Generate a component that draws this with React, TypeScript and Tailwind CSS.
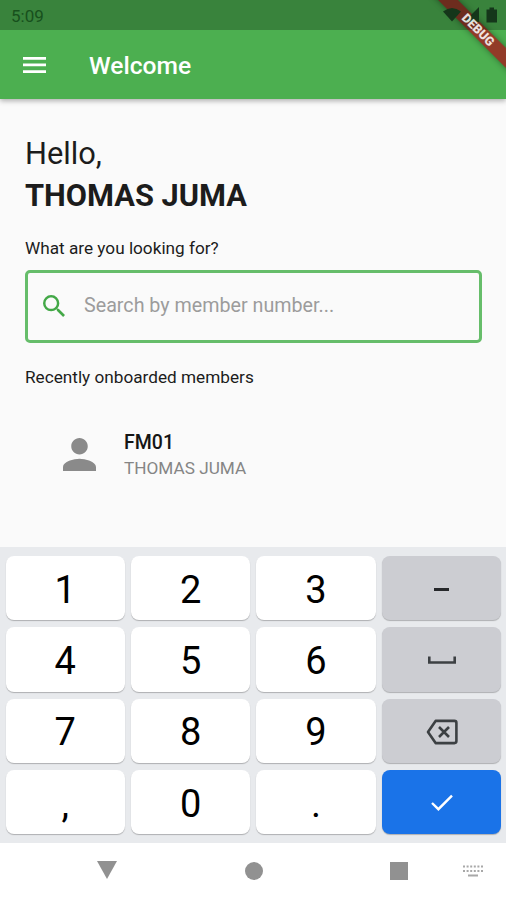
import type { ReactNode } from 'react';
import clsx from 'clsx';

interface Key {
  id: string;
  label?: string;
  icon?: ReactNode;
  variant?: 'default' | 'muted' | 'primary';
}

const keys: Key[] = [
  { id: '1', label: '1' },
  { id: '2', label: '2' },
  { id: '3', label: '3' },
  {
    id: 'minus',
    variant: 'muted',
    icon: (
      <svg className="h-[3px] w-[15px]" viewBox="0 0 15 3" fill="#26282b">
        <rect width="15" height="3" />
      </svg>
    ),
  },
  { id: '4', label: '4' },
  { id: '5', label: '5' },
  { id: '6', label: '6' },
  {
    id: 'space',
    variant: 'muted',
    icon: (
      <svg className="h-2 w-7" viewBox="0 0 28 8" fill="none" stroke="#3c4043" strokeWidth="2.6">
        <path d="M1.3 0.5V6.5H26.7V0.5" />
      </svg>
    ),
  },
  { id: '7', label: '7' },
  { id: '8', label: '8' },
  { id: '9', label: '9' },
  {
    id: 'backspace',
    variant: 'muted',
    icon: (
      <svg className="h-[26px] w-8" viewBox="0 0 32 26" fill="none" stroke="#3c4043" strokeWidth="2.6">
        <path d="M9.6 1.9H28.4Q30.4 1.9 30.4 3.9V22.1Q30.4 24.1 28.4 24.1H9.6L2 13Z" strokeLinejoin="round" />
        <path d="M13 8L23 18M23 8L13 18" />
      </svg>
    ),
  },
  { id: 'comma', label: ',' },
  { id: '0', label: '0' },
  { id: 'dot', label: '.' },
  {
    id: 'done',
    variant: 'primary',
    icon: (
      <svg className="h-[18px] w-[22px]" viewBox="0 0 22 18" fill="none" stroke="#fff" strokeWidth="2.4">
        <path d="M1 9L7.4 15.2L21 1.6" />
      </svg>
    ),
  },
];

const StatusBar = () => (
  <div className="absolute inset-x-0 top-0 flex h-[30px] items-center justify-between bg-black/25 pr-[9px] pl-[11px] text-[#17501c]">
    <span className="pt-[3px] text-[17px]">5:09</span>
    <svg className="h-4 w-[54px]" viewBox="0 0 54 16" fill="#15361a">
      <path d="M0 4.5Q9 -2.5 18 4.5L9 14.5Z" />
      <path d="M36 0V15H21Z" />
      <path d="M46.5 0.5H51V2.5H54V15.5H43.5V2.5H46.5Z" />
    </svg>
  </div>
);

const DebugBanner = () => (
  <div className="absolute top-[23px] left-[418px] h-[14px] w-[120px] rotate-45 bg-[#923b28] shadow-[0_0_6px_rgba(0,0,0,0.4)]" />
);

// sits above the status icons, the ribbon itself stays under them
const DebugLabel = () => (
  <span className="absolute top-[24px] left-[457px] w-[42px] rotate-45 text-center text-[12.5px] leading-[12px] font-black text-white/85">
    DEBUG
  </span>
);

const AppBar = () => (
  <header className="relative h-[99px] shrink-0 bg-[#4caf50] shadow-[0_2px_5px_rgba(0,0,0,0.3)]">
    <div className="absolute inset-0 overflow-hidden">
      <DebugBanner />
    </div>
    <StatusBar />
    <DebugLabel />
    <div className="flex h-full items-center pt-[31px] pl-[23px] text-white">
      <svg className="h-4 w-[23px]" viewBox="0 0 23 16" fill="currentColor">
        <path d="M0 0H23V2.7H0ZM0 6.6H23V9.3H0ZM0 13.2H23V15.9H0Z" />
      </svg>
      <h1 className="ml-[43px] pt-[2px] text-[24.6px] font-medium">Welcome</h1>
    </div>
  </header>
);

const SearchBox = () => (
  <div className="mt-[12px] flex h-[73px] items-center rounded-[5px] border-[3px] border-[#66bd6a] pb-[2px] pl-[15px]">
    <svg className="size-[22px]" viewBox="3 3 17.5 17.5" fill="#43a847">
      <path d="M15.5 14h-.79l-.28-.27A6.47 6.47 0 0 0 16 9.5 6.5 6.5 0 1 0 9.5 16c1.61 0 3.09-.59 4.23-1.57l.27.28v.79l5 4.99L20.49 19l-4.99-5zm-6 0C7.01 14 5 11.99 5 9.5S7.01 5 9.5 5 14 7.01 14 9.5 11.99 14 9.5 14z" />
    </svg>
    <span className="ml-[19px] text-[19.7px] text-[#9c9c9c]">Search by member number...</span>
  </div>
);

const MemberRow = ({ code, name }: { code: string; name: string }) => (
  <div className="mt-[42px] flex items-center pl-[38px]">
    <svg className="mb-px h-[33px] w-[33px]" viewBox="4 4 16 16" fill="#8a8a8a">
      <path d="M12 12c2.21 0 4-1.79 4-4s-1.79-4-4-4-4 1.79-4 4 1.79 4 4 4zm0 2c-2.67 0-8 1.34-8 4v2h16v-2c0-2.66-5.33-4-8-4z" />
    </svg>
    <div className="ml-7">
      <p className="pt-px text-[19.5px] leading-[26px] font-medium text-[#151515]">{code}</p>
      <p className="text-[17.2px] leading-[24px] text-[#858585]">{name}</p>
    </div>
  </div>
);

const Keyboard = () => (
  <div className="grid h-[296px] shrink-0 grid-cols-4 content-start gap-x-[6px] gap-y-[7px] bg-[#e8eaed] pt-[9px] pr-[5px] pl-[5.5px]">
    {keys.map(({ id, label, icon, variant = 'default' }) => (
      <button
        key={id}
        className={clsx(
          'flex h-[64.3px] items-center justify-center rounded-[8px] text-[38px] leading-none text-black shadow-[0_1px_1px_rgba(0,0,0,0.25)]',
          label ? 'pt-[3px]' : 'pt-[2px] pl-px',
          variant === 'default' && 'bg-white',
          variant === 'muted' && 'bg-[#cccdd2]',
          variant === 'primary' && 'bg-[#1a73e8]'
        )}
      >
        {icon ?? label}
      </button>
    ))}
  </div>
);

const NavBar = () => (
  <nav className="flex h-[57px] shrink-0 items-start bg-white pt-[18px] pl-[97px] text-[#919191]">
    <svg className="h-[18px] w-5" viewBox="0 0 20 18" fill="currentColor">
      <path d="M0 0H20L10 18Z" />
    </svg>
    <div className="mt-px ml-[128px] size-[18px] rounded-full bg-[#919191]" />
    <div className="mt-px ml-[127px] size-[18px] bg-[#919191]" />
    <svg className="mt-1 ml-[55px] h-3 w-5" viewBox="0 0 20 12" fill="#a8a8a8">
      {[0, 4.5].map((y) =>
        [0, 3.6, 7.2, 10.8, 14.4, 18].map((x) => (
          <rect key={`${x}-${y}`} x={x} y={y + 0.5} width="2" height="2" />
        ))
      )}
      <rect x="5" y="9.5" width="10" height="2" />
    </svg>
  </nav>
);

export default function App() {
  return (
    <div className="flex h-[900px] w-[506px] flex-col overflow-hidden bg-[#fafafa] font-['Roboto',sans-serif]">
      <AppBar />
      <main className="min-h-0 flex-1 px-[25px] pr-6 pt-[34px] text-[#1c1c1c]">
        <h2 className="text-[30.8px] leading-[42px]">
          Hello,
          <br />
          <span className="font-bold">THOMAS JUMA</span>
        </h2>
        <p className="mt-[21px] text-[17.2px] leading-5">What are you looking for?</p>
        <SearchBox />
        <p className="mt-[24px] text-[17.2px] leading-5">Recently onboarded members</p>
        <MemberRow code="FM01" name="THOMAS JUMA" />
      </main>
      <Keyboard />
      <NavBar />
    </div>
  );
}
